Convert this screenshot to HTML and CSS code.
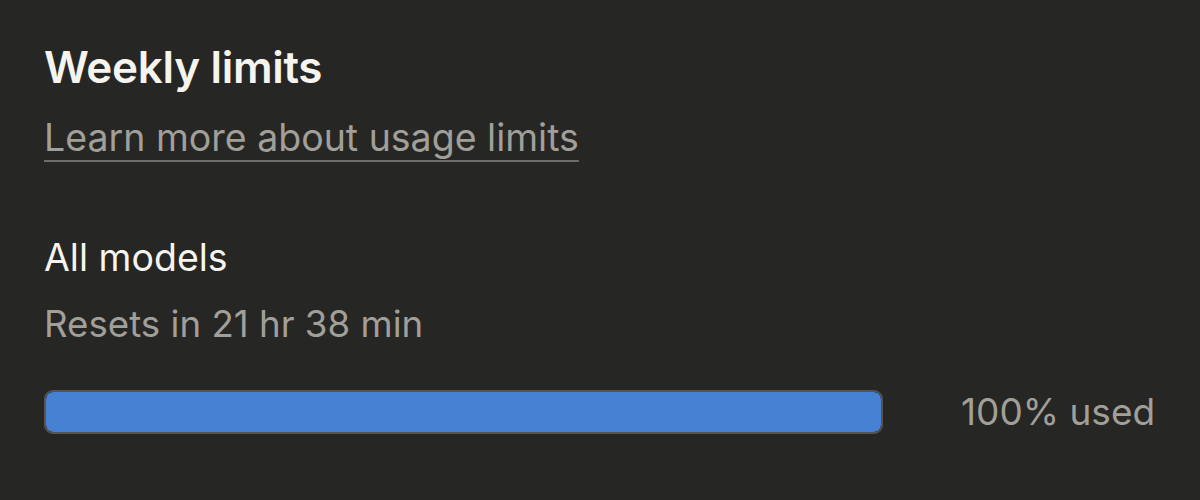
FILE: index.html
```html
<!DOCTYPE html>
<html>
<head>
<meta charset="utf-8">
<link rel="stylesheet" href="styles.css">
</head>
<body>
<main class="panel">
  <h2 class="title">Weekly limits</h2>
  <a class="learn" href="#">Learn more about usage limits</a>
  <section class="limit">
    <div class="limit-name">All models</div>
    <div class="limit-reset">Resets in 21 hr 38 min</div>
    <div class="limit-row">
      <div class="bar"><div class="bar-fill" style="width:100%"></div></div>
      <div class="limit-used">100% used</div>
    </div>
  </section>
</main>
</body>
</html>
```
FILE: styles.css
```css
html, body {
  margin: 0;
  padding: 0;
  background: #262624;
  height: 100%;
}
.panel {
  padding: 43px 20px 0 44px;
  font-family: Inter, "Noto Sans", sans-serif;
  color: #f5f4ef;
}
.title {
  margin: 0;
  font-size: 44px;
  font-weight: 600;
  line-height: 48px;
  letter-spacing: -0.3px;
}
.learn {
  display: block;
  width: max-content;
  margin-top: 25px;
  font-size: 37.5px;
  line-height: 44px;
  color: #a19f99;
  text-decoration: underline;
  text-decoration-color: #6e6c68;
  text-decoration-thickness: 2px;
  text-underline-offset: 9px;
}
.limit {
  margin-top: 76px;
}
.limit-name {
  font-size: 37.5px;
  line-height: 44px;
}
.limit-reset {
  margin-top: 22px;
  font-size: 36.7px;
  line-height: 44px;
  color: #a19f99;
}
.limit-row {
  margin-top: 44px;
  display: flex;
  align-items: center;
  gap: 78px;
}
.bar {
  flex: none;
  width: 839px;
  height: 44px;
  box-sizing: border-box;
  border: 2px solid #57544f;
  border-radius: 9px;
  background: #1f1e1d;
  overflow: hidden;
}
.bar-fill {
  height: 100%;
  background: #4681d4;
  border-radius: 7px;
}
.limit-used {
  white-space: nowrap;
  font-size: 37px;
  line-height: 44px;
  color: #a19f99;
}
```
